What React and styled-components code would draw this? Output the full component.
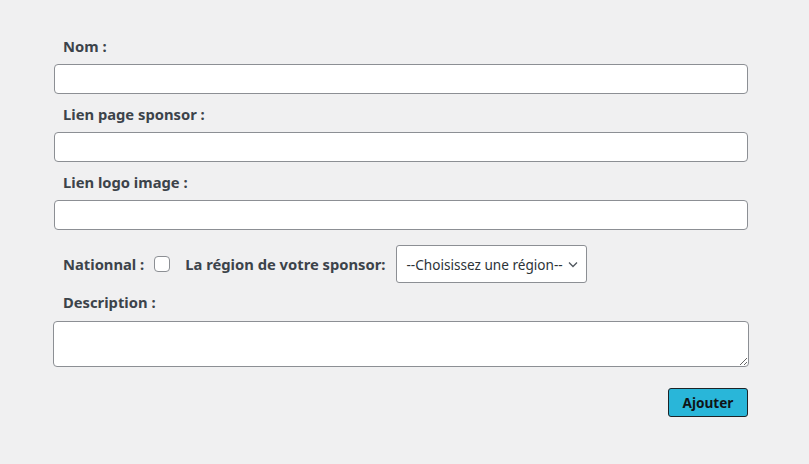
import React from "react";
import styled, { createGlobalStyle } from "styled-components";

const Global = createGlobalStyle`
  html, body { margin: 0; padding: 0; background: #f0f0f1; }
  body { font-family: "Noto Sans", "Open Sans", sans-serif; color: #3c434a; }
  * { box-sizing: border-box; }
`;

const Form = styled.form`
  width: 809px;
  height: 464px;
  padding: 36px 61px 0 54px;
  display: flex;
  flex-direction: column;
`;

const Label = styled.label`
  display: block;
  font-size: 14.75px;
  font-weight: 700;
  line-height: 20px;
  padding-left: 9px;
  margin-bottom: ${p => p.$mb ?? 8}px;
  color: #3c434a;
`;

const Input = styled.input`
  display: block;
  width: 694px;
  height: 30px;
  margin: 0 0 10px 0;
  border: 1px solid #8c8f94;
  border-radius: 4px;
  background: #fff;
  font-size: 14px;
  padding: 0 8px;
`;

const Row = styled.div`
  display: flex;
  align-items: center;
  height: 38px;
  margin-top: 5px;
  margin-bottom: 9px;
  padding-left: 9px;
`;

const InlineLabel = styled.label`
  font-size: 14.75px;
  font-weight: 700;
  line-height: 20px;
  color: #3c434a;
  margin-right: ${p => p.$mr || 0}px;
`;

const Check = styled.span`
  width: 16px;
  height: 16px;
  border: 1px solid #8c8f94;
  border-radius: 4px;
  background: #fff;
  margin-right: 15px;
`;

const Select = styled.div`
  width: 191px;
  height: 38px;
  border: 1px solid #8c8f94;
  border-radius: 3px;
  background: #fff;
  display: flex;
  align-items: center;
  justify-content: space-between;
  padding: 0 7px 0 9px;
  font-size: 13.6px;
  color: #2c3338;
`;

const TextArea = styled.textarea`
  display: block;
  width: 696px;
  height: 46px;
  margin-left: -1px;
  border: 1px solid #8c8f94;
  border-radius: 4px;
  background: #fff;
  font-family: inherit;
`;

const Actions = styled.div`
  display: flex;
  justify-content: flex-end;
  width: 694px;
  margin-top: 21px;
`;

const Button = styled.button`
  width: 80px;
  height: 29px;
  background: #29b6d9;
  border: 1px solid #1d2327;
  border-radius: 3px;
  font-family: inherit;
  font-size: 13.6px;
  font-weight: 700;
  color: #101517;
  cursor: pointer;
`;

export default function App() {
  return (
    <>
      <Global />
      <Form onSubmit={e => e.preventDefault()}>
        <Label>Nom :</Label>
        <Input />
        <Label>Lien page sponsor :</Label>
        <Input />
        <Label>Lien logo image :</Label>
        <Input />
        <Row>
          <InlineLabel $mr={10}>Nationnal :</InlineLabel>
          <Check />
          <InlineLabel $mr={11}>La région de votre sponsor:</InlineLabel>
          <Select>
            <span>--Choisissez une région--</span>
            <svg width="12" height="12" viewBox="0 0 12 12">
              <path d="M2 4.5 L6 8.5 L10 4.5" fill="none" stroke="#50575e" strokeWidth="1.3" />
            </svg>
          </Select>
        </Row>
        <Label $mb={9}>Description :</Label>
        <TextArea />
        <Actions>
          <Button type="submit">Ajouter</Button>
        </Actions>
      </Form>
    </>
  );
}
